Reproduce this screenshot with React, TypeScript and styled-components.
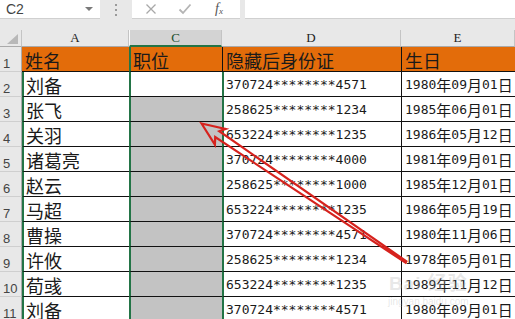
import React from "react";
import styled, { createGlobalStyle } from "styled-components";

const GREEN = "#237446";

const GlobalStyle = createGlobalStyle`
  html, body { margin: 0; padding: 0; width: 515px; height: 319px; overflow: hidden; background: #e8e8e8; }
  #root { width: 515px; height: 319px; }
`;

const Page = styled.div`
  position: relative;
  width: 515px;
  height: 319px;
  overflow: hidden;
  background: #e8e8e8;
`;

const Toolbar = styled.div`
  display: flex;
  height: 19px;
  margin-bottom: 11px;
`;

const NameBox = styled.div`
  width: 100px;
  box-sizing: border-box;
  background: #fff;
  border-bottom: 1px solid #d0d0d0;
  display: flex;
  align-items: center;
  justify-content: space-between;
  padding: 0 6px 0 6px;
  font-family: "Liberation Sans", Arial, sans-serif;
  font-size: 14px;
  color: #444;
`;

const DropArrow = styled.span`
  width: 0;
  height: 0;
  border-left: 4px solid transparent;
  border-right: 4px solid transparent;
  border-top: 4px solid #7a7a7a;
  margin-right: 1px;
`;

const Separator = styled.div`
  width: 32px;
  display: flex;
  flex-direction: column;
  align-items: center;
  justify-content: center;
  gap: 3px;
`;

const Dot = styled.span`
  width: 2px;
  height: 2px;
  background: #9a9a9a;
`;

const FxBox = styled.div`
  width: 108px;
  box-sizing: border-box;
  background: #fff;
  border-bottom: 1px solid #d0d0d0;
  display: flex;
  align-items: center;
  padding-left: 13px;
  gap: 21px;
`;

const FxLabel = styled.span`
  font-family: "Liberation Serif", serif;
  font-style: italic;
  font-size: 14px;
  color: #555;
  margin-left: 2px;
  sub { font-size: 9px; vertical-align: -1px; }
`;

const FormulaInput = styled.div`
  flex: 1;
  margin-left: 5px;
  background: #fff;
  border-bottom: 1px solid #d0d0d0;
`;

const Sheet = styled.div`
  display: grid;
  grid-template-columns: 22px 107px 93px 179px 114px;
  grid-template-rows: 17px;
  grid-auto-rows: 25px;
`;

const Corner = styled.div`
  box-sizing: border-box;
  background: #e8e8e8;
  border-right: 1px solid #c4c4c4;
  border-bottom: 1px solid #aaaaaa;
  position: relative;
`;

const CornerTri = styled.span`
  position: absolute;
  right: 3px;
  bottom: 2px;
  width: 0;
  height: 0;
  border-left: 11px solid transparent;
  border-bottom: 10px solid #b8b8b8;
`;

const ColHead = styled.div<{ $sel?: boolean; $hiddenBefore?: boolean }>`
  box-sizing: border-box;
  background: ${(p) => (p.$sel ? "#d3d3d3" : "#e8e8e8")};
  border-right: 1px solid #c4c4c4;
  border-bottom: ${(p) => (p.$sel ? `2px solid ${GREEN}` : "1px solid #aaaaaa")};
  border-left: ${(p) => (p.$hiddenBefore ? "1px solid #fafafa" : "none")};
  display: flex;
  align-items: flex-end;
  justify-content: center;
  padding-bottom: ${(p) => (p.$sel ? "0px" : "1px")};
  font-family: "Liberation Serif", "DejaVu Serif", serif;
  font-size: 13px;
  line-height: 14px;
  color: ${(p) => (p.$sel ? "#1d4f30" : "#222")};
`;

const RowHead = styled.div`
  box-sizing: border-box;
  background: #e8e8e8;
  border-right: 1px solid #aaaaaa;
  border-bottom: 1px solid #cfcfcf;
  display: flex;
  align-items: flex-end;
  padding-left: 3px;
  font-family: "Liberation Sans", Arial, sans-serif;
  font-size: 13px;
  line-height: 15px;
  color: #444;
`;

const Cell = styled.div<{
  $left?: "green" | "black" | "none";
  $bg?: string;
  $mono?: boolean;
}>`
  box-sizing: border-box;
  background: ${(p) => p.$bg || "#fff"};
  border-bottom: 1px solid #111;
  border-left: ${(p) =>
    p.$left === "green" ? `2px solid ${GREEN}` : p.$left === "none" ? "none" : "1px solid #111"};
  display: flex;
  align-items: center;
  padding-left: ${(p) => (p.$left === "green" ? "2px" : "3px")};
  padding-top: 1px;
  white-space: nowrap;
  overflow: hidden;
  font-family: ${(p) =>
    p.$mono
      ? `"DejaVu Sans Mono", "Liberation Mono", "Noto Sans CJK SC", monospace`
      : `"Noto Sans CJK SC", "Noto Sans", sans-serif`};
  font-size: ${(p) => (p.$mono ? "13px" : "18px")};
  line-height: 1;
  color: #1a1a1a;
`;

const Cjk = styled.span`
  font-family: "Noto Sans CJK SC", sans-serif;
  font-size: 15px;
`;

const Arrow = styled.svg`
  position: absolute;
  left: 0;
  top: 0;
  pointer-events: none;
`;

const Watermark = styled.div`
  position: absolute;
  left: 388px;
  top: 268px;
  display: flex;
  flex-direction: column;
  align-items: center;
  color: rgba(175, 175, 175, 0.3);
  font-family: "Liberation Sans", "Noto Sans CJK SC", sans-serif;
  pointer-events: none;
`;

const WmTitle = styled.span`
  font-size: 19px;
  font-weight: bold;
  letter-spacing: 1px;
`;

const WmUrl = styled.span`
  font-size: 10px;
  margin-top: 1px;
`;

const ORANGE = "#e36c0a";

const rows: [string, string, string][] = [
  ["刘备", "370724********4571", "1980年09月01日"],
  ["张飞", "258625********1234", "1985年06月01日"],
  ["关羽", "653224********1235", "1986年05月12日"],
  ["诸葛亮", "370724********4000", "1981年09月01日"],
  ["赵云", "258625********1000", "1985年12月01日"],
  ["马超", "653224********1235", "1986年05月19日"],
  ["曹操", "370724********4571", "1980年11月06日"],
  ["许攸", "258625********1234", "1978年05月01日"],
  ["荀彧", "653224********1235", "1989年11月12日"],
  ["刘备", "370724********4571", "1980年09月01日"],
];

function DateText({ value }: { value: string }) {
  const parts = value.split(/([年月日])/).filter(Boolean);
  return (
    <>
      {parts.map((p, i) =>
        /[年月日]/.test(p) ? <Cjk key={i}>{p}</Cjk> : <span key={i}>{p}</span>
      )}
    </>
  );
}

function arrowPoints() {
  const T = { x: 201.5, y: 123.5 };
  const E = { x: 406, y: 262 };
  const dx = E.x - T.x;
  const dy = E.y - T.y;
  const len = Math.hypot(dx, dy);
  const a = { x: dx / len, y: dy / len };
  const n = { x: -a.y, y: a.x };
  const pt = (along: number, side: number) =>
    `${(T.x + a.x * along + n.x * side).toFixed(1)},${(T.y + a.y * along + n.y * side).toFixed(1)}`;
  return [
    pt(0, 0),
    pt(23, -9),
    pt(19, -3.6),
    pt(len, -0.8),
    pt(len, 0.8),
    pt(19, 3.6),
    pt(23, 10),
  ].join(" ");
}

export default function App() {
  return (
    <Page>
      <GlobalStyle />
      <Toolbar>
        <NameBox>
          <span>C2</span>
          <DropArrow />
        </NameBox>
        <Separator>
          <Dot />
          <Dot />
          <Dot />
        </Separator>
        <FxBox>
          <svg width="12" height="12" viewBox="0 0 12 12">
            <path d="M1.5 1.5 L10.5 10.5 M10.5 1.5 L1.5 10.5" stroke="#a8a8a8" strokeWidth="1.3" fill="none" />
          </svg>
          <svg width="14" height="12" viewBox="0 0 14 12">
            <path d="M1.5 6.5 L5 10 L12.5 1.5" stroke="#b4b4b4" strokeWidth="1.8" fill="none" />
          </svg>
          <FxLabel>
            f<sub>x</sub>
          </FxLabel>
        </FxBox>
        <FormulaInput />
      </Toolbar>

      <Sheet>
        <Corner>
          <CornerTri />
        </Corner>
        <ColHead>A</ColHead>
        <ColHead $sel $hiddenBefore>C</ColHead>
        <ColHead>D</ColHead>
        <ColHead>E</ColHead>

        <RowHead>1</RowHead>
        <Cell $left="none" $bg={ORANGE}>姓名</Cell>
        <Cell $left="green" $bg={ORANGE}>职位</Cell>
        <Cell $left="black" $bg={ORANGE}>隐藏后身份证</Cell>
        <Cell $left="black" $bg={ORANGE}>生日</Cell>

        {rows.map(([name, id, date], i) => (
          <React.Fragment key={i}>
            <RowHead>{i + 2}</RowHead>
            <Cell $left="green">{name}</Cell>
            <Cell $left="green" $bg={i === 0 ? "#fff" : "#c3c3c3"} />
            <Cell $left="green" $mono>
              {id}
            </Cell>
            <Cell $left="black" $mono>
              <DateText value={date} />
            </Cell>
          </React.Fragment>
        ))}
      </Sheet>

      <Watermark>
        <WmTitle>Bai 经验</WmTitle>
        <WmUrl>jingyan.baidu.com</WmUrl>
      </Watermark>

      <Arrow width="515" height="319" viewBox="0 0 515 319">
        <polygon
          points={arrowPoints()}
          fill="none"
          stroke="#d6221d"
          strokeWidth="2.2"
          strokeLinejoin="miter"
        />
      </Arrow>
    </Page>
  );
}
